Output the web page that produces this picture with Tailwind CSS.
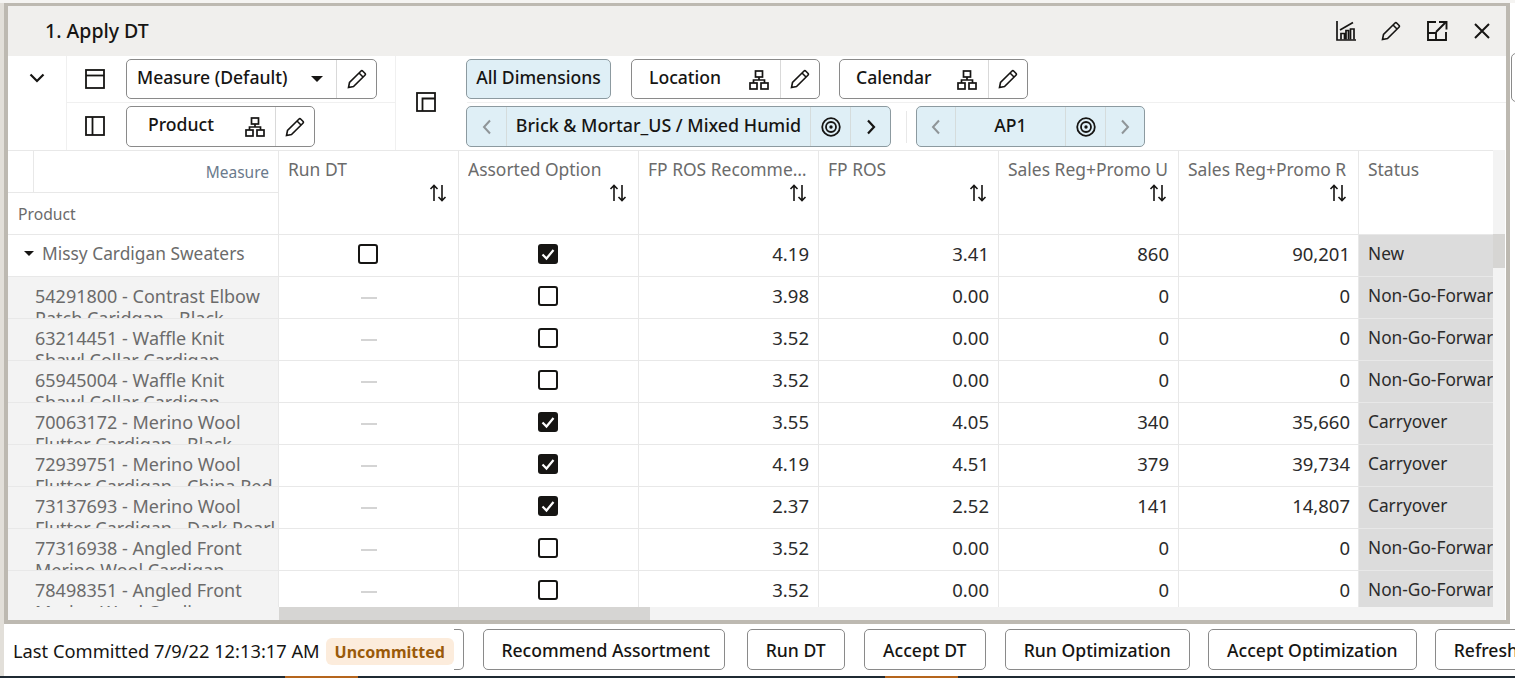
<!DOCTYPE html>
<html lang="en">
<head>
<meta charset="UTF-8" />
<title>1. Apply DT</title>
<script src="https://cdn.jsdelivr.net/npm/@tailwindcss/browser@4"></script>
</head>
<body class="w-[1515px] h-[678px] overflow-hidden bg-white font-['Noto_Sans',sans-serif] text-[17.6px] text-[#161513]">
<!-- top strip -->
<div class="h-[3px] bg-[#f5f4f2]"></div>
<div class="flex h-[673px]">
    <div class="w-[4px] bg-[#e2dfd9]"></div>
    <div class="w-[1511px] relative">
        <div class="absolute right-[-6px] top-[50px] w-[10px] h-[49px] border border-[#8a8a8a] rounded-[5px] bg-white"></div>

        <!-- panel -->
        <div class="w-[1506px] h-[621px] border-x-4 border-b-4 border-t-[3px] border-[#bdb9b1] flex flex-col bg-white">
            <!-- title bar -->
            <div class="h-[50px] bg-[#f0efed] flex items-center pl-[37px] pr-[15px] shrink-0">
                <div class="text-[19.5px] font-medium flex-1">1. Apply DT</div>
                <div class="flex items-center gap-[25px]">
                    <svg class="w-[20px] h-[20px]" viewBox="0 0 20 20" fill="none" stroke="#161513" stroke-width="1.700"><path d="M1 0v19h19"/><path d="M4 9L17 1.500"/><path d="M5 18.500v-6h3.500v6M10 18.500V9.500h2.500v9M14.500 18.500V8h3.500v10.500"/></svg>
                    <svg class="w-[20px] h-[20px]" viewBox="0 0 20 20" fill="none" stroke="#161513" stroke-width="1.600"><path d="M1.500 18.500l1-5L13.800 2.200a1.500 1.500 0 0 1 2.100 0l2 2a1.500 1.500 0 0 1 0 2.100L6.500 17.500z"/><path d="M12 4l4 4"/></svg>
                    <svg class="w-[22px] h-[22px]" viewBox="0 0 22 22" fill="none" stroke="#161513" stroke-width="1.900"><path d="M10 2H2v18h18v-8"/><path d="M2 13h8v7"/><path d="M10 12L20 2"/><path d="M13 2h7.500v7.500"/></svg>
                    <svg class="w-[18px] h-[18px]" viewBox="0 0 18 18" fill="none" stroke="#161513" stroke-width="2"><path d="M2 2l14 14M16 2L2 16"/></svg>
                </div>
            </div>

            <!-- toolbar -->
            <div class="h-[94px] shrink-0 flex bg-white">
                <div class="w-[59px] border-r border-[#f0f0f0] pt-[17px] pl-[21px]">
                    <svg class="w-[16px] h-[10px]" viewBox="0 0 16 10" fill="none" stroke="#161513" stroke-width="2.200"><path d="M1.500 1.500L8 8l6.500-6.500"/></svg>
                </div>
                <div class="w-[329px] border-r border-[#f0f0f0]">
                    <div class="h-[47px] border-b border-[#f0f0f0] pt-[3px] pl-[18px] flex">
                        <svg class="w-[20px] h-[20px] mt-[10px] mr-[21px]" viewBox="0 0 20 20" fill="none" stroke="#161513" stroke-width="1.800"><rect x="1" y="1" width="18" height="18"/><path d="M1 6.500h18"/></svg>
                        <div class="w-[251px] h-[40px] border border-[#8a8a8a] rounded-[5px] flex items-center">
                            <div class="flex-1 pl-[10px] font-medium pb-[4px]">Measure (Default)</div>
                            <div class="w-0 h-0 border-x-[6px] border-x-transparent border-t-[6px] border-t-[#161513] mr-[13px]"></div>
                            <div class="w-[40px] h-full border-l border-[#d9d9d9] flex items-center justify-center">
                                <svg class="w-[20px] h-[20px]" viewBox="0 0 20 20" fill="none" stroke="#161513" stroke-width="1.600"><path d="M1.500 18.500l1-5L13.800 2.200a1.500 1.500 0 0 1 2.100 0l2 2a1.500 1.500 0 0 1 0 2.100L6.500 17.500z"/><path d="M12 4l4 4"/></svg>
                            </div>
                        </div>
                    </div>
                    <div class="pt-[3px] pl-[18px] flex">
                        <svg class="w-[20px] h-[20px] mt-[10px] mr-[21px]" viewBox="0 0 20 20" fill="none" stroke="#161513" stroke-width="1.800"><rect x="1" y="1" width="18" height="18"/><path d="M7.500 1v18"/></svg>
                        <div class="w-[189px] h-[41px] border border-[#8a8a8a] rounded-[5px] flex items-center">
                            <div class="flex-1 pl-[21px] font-medium pb-[4px]">Product</div>
                            <svg class="w-[20px] h-[20px] mr-[10px] mt-[1px]" viewBox="0 0 20 20" fill="none" stroke="#161513" stroke-width="1.700"><rect x="6.500" y="1" width="7" height="6"/><rect x="1" y="13" width="7" height="6"/><rect x="12" y="13" width="7" height="6"/><path d="M10 7v3M4.500 13v-3h11v3"/></svg>
                            <div class="w-[39px] h-full border-l border-[#d9d9d9] flex items-center justify-center">
                                <svg class="w-[20px] h-[20px]" viewBox="0 0 20 20" fill="none" stroke="#161513" stroke-width="1.600"><path d="M1.500 18.500l1-5L13.800 2.200a1.500 1.500 0 0 1 2.100 0l2 2a1.500 1.500 0 0 1 0 2.100L6.500 17.500z"/><path d="M12 4l4 4"/></svg>
                            </div>
                        </div>
                    </div>
                </div>
                <div class="w-[60px] flex items-center justify-center pb-[2px]">
                    <svg class="w-[20px] h-[20px]" viewBox="0 0 20 20" fill="none" stroke="#161513" stroke-width="1.800"><rect x="1" y="1" width="18" height="18"/><path d="M6.500 19V6.500H19"/></svg>
                </div>
                <div class="flex-1">
                    <div class="h-[47px] border-b border-[#f0f0f0] ml-[11px] pt-[3px] flex">
                        <div class="w-[145px] h-[40px] -ml-[1px] border border-[#8c9aa0] rounded-[5px] bg-[#dfeff6] flex items-center justify-center font-medium pb-[4px]">All Dimensions</div>
                        <div class="w-[189px] h-[40px] ml-[20px] border border-[#8a8a8a] rounded-[5px] flex items-center">
                            <div class="flex-1 pl-[17px] font-medium pb-[4px]">Location</div>
                            <svg class="w-[20px] h-[20px] mr-[11px] mt-[1px]" viewBox="0 0 20 20" fill="none" stroke="#161513" stroke-width="1.700"><rect x="6.500" y="1" width="7" height="6"/><rect x="1" y="13" width="7" height="6"/><rect x="12" y="13" width="7" height="6"/><path d="M10 7v3M4.500 13v-3h11v3"/></svg>
                            <div class="w-[39px] h-full border-l border-[#d9d9d9] flex items-center justify-center">
                                <svg class="w-[20px] h-[20px]" viewBox="0 0 20 20" fill="none" stroke="#161513" stroke-width="1.600"><path d="M1.500 18.500l1-5L13.800 2.200a1.500 1.500 0 0 1 2.100 0l2 2a1.500 1.500 0 0 1 0 2.100L6.500 17.500z"/><path d="M12 4l4 4"/></svg>
                            </div>
                        </div>
                        <div class="w-[189px] h-[40px] ml-[19px] border border-[#8a8a8a] rounded-[5px] flex items-center">
                            <div class="flex-1 pl-[16px] font-medium pb-[4px]">Calendar</div>
                            <svg class="w-[20px] h-[20px] mr-[11px] mt-[1px]" viewBox="0 0 20 20" fill="none" stroke="#161513" stroke-width="1.700"><rect x="6.500" y="1" width="7" height="6"/><rect x="1" y="13" width="7" height="6"/><rect x="12" y="13" width="7" height="6"/><path d="M10 7v3M4.500 13v-3h11v3"/></svg>
                            <div class="w-[39px] h-full border-l border-[#d9d9d9] flex items-center justify-center">
                                <svg class="w-[20px] h-[20px]" viewBox="0 0 20 20" fill="none" stroke="#161513" stroke-width="1.600"><path d="M1.500 18.500l1-5L13.800 2.200a1.500 1.500 0 0 1 2.100 0l2 2a1.500 1.500 0 0 1 0 2.100L6.500 17.500z"/><path d="M12 4l4 4"/></svg>
                            </div>
                        </div>
                    </div>
                    <div class="pt-[3px] pl-[10px] flex items-start">
                        <div class="w-[425px] h-[41px] border border-[#8c9aa0] rounded-[5px] bg-[#dfeff6] flex items-center">
                            <div class="w-[40px] h-full border-r border-[#d5dcdc] flex items-center justify-center">
                                <svg class="w-[10px] h-[16px]" viewBox="0 0 10 16" fill="none" stroke="#8f9598" stroke-width="2"><path d="M8 1.500L2 8l6 6.500"/></svg>
                            </div>
                            <div class="w-[303px] h-full flex items-center justify-center font-medium pb-[2px] whitespace-nowrap text-[17.85px]">Brick &amp; Mortar_US / Mixed Humid</div>
                            <div class="w-[41px] h-full border-x border-[#d5dcdc] flex items-center justify-center">
                                <svg class="w-[20px] h-[20px]" viewBox="0 0 20 20" fill="none" stroke="#161513"><circle cx="10" cy="10" r="8.800" stroke-width="1.800"/><circle cx="10" cy="10" r="5" stroke-width="1.800"/><circle cx="10" cy="10" r="1.700" fill="#161513" stroke="none"/></svg>
                            </div>
                            <div class="flex-1 h-full flex items-center justify-center">
                                <svg class="w-[10px] h-[16px]" viewBox="0 0 10 16" fill="none" stroke="#161513" stroke-width="2.200"><path d="M2 1.500L8 8l-6 6.500"/></svg>
                            </div>
                        </div>
                        <div class="w-[1px] h-[32px] ml-[15px] mt-[5px] bg-[#e8e8e8]"></div>
                        <div class="w-[229px] h-[41px] ml-[9px] border border-[#8c9aa0] rounded-[5px] bg-[#dfeff6] flex items-center">
                            <div class="w-[39px] h-full border-r border-[#d5dcdc] flex items-center justify-center">
                                <svg class="w-[10px] h-[16px]" viewBox="0 0 10 16" fill="none" stroke="#8f9598" stroke-width="2"><path d="M8 1.500L2 8l6 6.500"/></svg>
                            </div>
                            <div class="w-[109px] h-full flex items-center justify-center font-medium pb-[2px]">AP1</div>
                            <div class="w-[41px] h-full border-x border-[#d5dcdc] flex items-center justify-center">
                                <svg class="w-[20px] h-[20px]" viewBox="0 0 20 20" fill="none" stroke="#161513"><circle cx="10" cy="10" r="8.800" stroke-width="1.800"/><circle cx="10" cy="10" r="5" stroke-width="1.800"/><circle cx="10" cy="10" r="1.700" fill="#161513" stroke="none"/></svg>
                            </div>
                            <div class="flex-1 h-full flex items-center justify-center">
                                <svg class="w-[10px] h-[16px]" viewBox="0 0 10 16" fill="none" stroke="#8f9598" stroke-width="2"><path d="M2 1.500L8 8l-6 6.500"/></svg>
                            </div>
                        </div>
                    </div>
                </div>
            </div>

            <!-- table -->
            <div class="flex h-[470px]">
                <div class="w-[1485px]">
                    <div class="h-[457px] overflow-hidden">
                        <!-- header -->
                        <div class="flex h-[85px] border-y border-[#e8e8e8] text-[#6b6b6b] text-[17.45px]">
                            <div class="w-[271px] border-r border-[#e8e8e8]">
                                <div class="flex h-[42px] border-b border-[#e8e8e8]">
                                    <div class="w-[26px] border-r border-[#e8e8e8]"></div>
                                    <div class="flex-1 text-right pr-[9px] pt-[10px] text-[15.5px] leading-[22px] text-[#6b7a8c]">Measure</div>
                                </div>
                                <div class="pl-[10px] pt-[10px] text-[15.7px] leading-[22px]">Product</div>
                            </div>
                            <div class="w-[180px] border-r border-[#e8e8e8] px-[9px] pt-[6px] leading-[24px]">
                                <div class="truncate">Run DT</div>
                                <svg class="w-[18px] h-[18px] ml-auto mr-[2px] mt-[3px]" viewBox="0 0 18 18" fill="none" stroke="#161513" stroke-width="1.600"><path d="M5 17V1.500M1.500 5L5 1.500 8.500 5"/><path d="M13 1v15.500M9.500 13l3.500 3.500 3.500-3.500"/></svg>
                            </div>
                            <div class="w-[180px] border-r border-[#e8e8e8] px-[9px] pt-[6px] leading-[24px]">
                                <div class="truncate">Assorted Option</div>
                                <svg class="w-[18px] h-[18px] ml-auto mr-[2px] mt-[3px]" viewBox="0 0 18 18" fill="none" stroke="#161513" stroke-width="1.600"><path d="M5 17V1.500M1.500 5L5 1.500 8.500 5"/><path d="M13 1v15.500M9.500 13l3.500 3.500 3.500-3.500"/></svg>
                            </div>
                            <div class="w-[180px] border-r border-[#e8e8e8] px-[9px] pt-[6px] leading-[24px]">
                                <div class="truncate">FP ROS Recommended</div>
                                <svg class="w-[18px] h-[18px] ml-auto mr-[2px] mt-[3px]" viewBox="0 0 18 18" fill="none" stroke="#161513" stroke-width="1.600"><path d="M5 17V1.500M1.500 5L5 1.500 8.500 5"/><path d="M13 1v15.500M9.500 13l3.500 3.500 3.500-3.500"/></svg>
                            </div>
                            <div class="w-[180px] border-r border-[#e8e8e8] px-[9px] pt-[6px] leading-[24px]">
                                <div class="truncate">FP ROS</div>
                                <svg class="w-[18px] h-[18px] ml-auto mr-[2px] mt-[3px]" viewBox="0 0 18 18" fill="none" stroke="#161513" stroke-width="1.600"><path d="M5 17V1.500M1.500 5L5 1.500 8.500 5"/><path d="M13 1v15.500M9.500 13l3.500 3.500 3.500-3.500"/></svg>
                            </div>
                            <div class="w-[180px] border-r border-[#e8e8e8] px-[9px] pt-[6px] leading-[24px]">
                                <div class="whitespace-nowrap overflow-hidden">Sales Reg+Promo U</div>
                                <svg class="w-[18px] h-[18px] ml-auto mr-[2px] mt-[3px]" viewBox="0 0 18 18" fill="none" stroke="#161513" stroke-width="1.600"><path d="M5 17V1.500M1.500 5L5 1.500 8.500 5"/><path d="M13 1v15.500M9.500 13l3.500 3.500 3.500-3.500"/></svg>
                            </div>
                            <div class="w-[180px] border-r border-[#e8e8e8] px-[9px] pt-[6px] leading-[24px]">
                                <div class="whitespace-nowrap overflow-hidden">Sales Reg+Promo R</div>
                                <svg class="w-[18px] h-[18px] ml-auto mr-[2px] mt-[3px]" viewBox="0 0 18 18" fill="none" stroke="#161513" stroke-width="1.600"><path d="M5 17V1.500M1.500 5L5 1.500 8.500 5"/><path d="M13 1v15.500M9.500 13l3.500 3.500 3.500-3.500"/></svg>
                            </div>
                            <div class="w-[134px] px-[9px] pt-[6px] leading-[24px]">Status</div>
                        </div>

                        <!-- rows -->
                        <div class="flex h-[42px] border-b border-[#e8e8e8] items-stretch text-[#2b2b2b]">
                            <div class="w-[271px] border-r border-[#e8e8e8] flex items-center pl-[16px] pb-[4px] text-[#6b6b6b] text-[17.35px]">
                                <div class="w-0 h-0 border-x-[5px] border-x-transparent border-t-[5px] border-t-[#161513] mr-[8px]"></div>Missy Cardigan Sweaters
                            </div>
                            <div class="w-[180px] border-r border-[#e8e8e8] flex items-center justify-center pb-[4px] pr-[2px]"><div class="w-[20px] h-[20px] border-2 border-[#161513] rounded-[3px]"></div></div>
                            <div class="w-[180px] border-r border-[#e8e8e8] flex items-center justify-center pb-[4px] pr-[2px]"><div class="w-[20px] h-[20px] bg-[#161513] rounded-[3px] flex items-center justify-center"><svg class="w-[14px] h-[14px]" viewBox="0 0 14 14" fill="none" stroke="#fff" stroke-width="2.200"><path d="M1.500 7.500L5.500 11.500L12.500 3"/></svg></div></div>
                            <div class="w-[180px] border-r border-[#e8e8e8] flex items-center justify-end pr-[9px] pb-[4px] text-[18.5px]">4.19</div>
                            <div class="w-[180px] border-r border-[#e8e8e8] flex items-center justify-end pr-[9px] pb-[4px] text-[18.5px]">3.41</div>
                            <div class="w-[180px] border-r border-[#e8e8e8] flex items-center justify-end pr-[9px] pb-[4px] text-[18.5px]">860</div>
                            <div class="w-[180px] border-r border-[#e8e8e8] flex items-center justify-end pr-[8px] pb-[4px] text-[18.5px]">90,201</div>
                            <div class="w-[134px] bg-[#dcdcdc] flex items-center pl-[9px] pb-[4px] whitespace-nowrap overflow-hidden text-[17.3px]">New</div>
                        </div>

                        <div class="flex h-[42px] border-b border-[#e8e8e8] items-stretch text-[#2b2b2b]">
                            <div class="w-[271px] border-r border-[#e8e8e8] bg-[#f3f3f3] pl-[27px] pt-[8px] leading-[22px] text-[#6b6b6b] text-[18px] overflow-hidden">54291800 - Contrast Elbow<br>Patch Caridgan - Black</div>
                            <div class="w-[180px] border-r border-[#e8e8e8] flex items-center justify-center"><div class="w-[16px] h-[2px] bg-[#d4d4d4]"></div></div>
                            <div class="w-[180px] border-r border-[#e8e8e8] flex items-center justify-center pb-[4px] pr-[2px]"><div class="w-[20px] h-[20px] border-2 border-[#161513] rounded-[3px]"></div></div>
                            <div class="w-[180px] border-r border-[#e8e8e8] flex items-center justify-end pr-[9px] pb-[4px] text-[18.5px]">3.98</div>
                            <div class="w-[180px] border-r border-[#e8e8e8] flex items-center justify-end pr-[9px] pb-[4px] text-[18.5px]">0.00</div>
                            <div class="w-[180px] border-r border-[#e8e8e8] flex items-center justify-end pr-[9px] pb-[4px] text-[18.5px]">0</div>
                            <div class="w-[180px] border-r border-[#e8e8e8] flex items-center justify-end pr-[8px] pb-[4px] text-[18.5px]">0</div>
                            <div class="w-[134px] bg-[#dcdcdc] flex items-center pl-[9px] pb-[4px] whitespace-nowrap overflow-hidden text-[17.3px]">Non-Go-Forward</div>
                        </div>

                        <div class="flex h-[42px] border-b border-[#e8e8e8] items-stretch text-[#2b2b2b]">
                            <div class="w-[271px] border-r border-[#e8e8e8] bg-[#f3f3f3] pl-[27px] pt-[8px] leading-[22px] text-[#6b6b6b] text-[18px] overflow-hidden">63214451 - Waffle Knit<br>Shawl Collar Cardigan</div>
                            <div class="w-[180px] border-r border-[#e8e8e8] flex items-center justify-center"><div class="w-[16px] h-[2px] bg-[#d4d4d4]"></div></div>
                            <div class="w-[180px] border-r border-[#e8e8e8] flex items-center justify-center pb-[4px] pr-[2px]"><div class="w-[20px] h-[20px] border-2 border-[#161513] rounded-[3px]"></div></div>
                            <div class="w-[180px] border-r border-[#e8e8e8] flex items-center justify-end pr-[9px] pb-[4px] text-[18.5px]">3.52</div>
                            <div class="w-[180px] border-r border-[#e8e8e8] flex items-center justify-end pr-[9px] pb-[4px] text-[18.5px]">0.00</div>
                            <div class="w-[180px] border-r border-[#e8e8e8] flex items-center justify-end pr-[9px] pb-[4px] text-[18.5px]">0</div>
                            <div class="w-[180px] border-r border-[#e8e8e8] flex items-center justify-end pr-[8px] pb-[4px] text-[18.5px]">0</div>
                            <div class="w-[134px] bg-[#dcdcdc] flex items-center pl-[9px] pb-[4px] whitespace-nowrap overflow-hidden text-[17.3px]">Non-Go-Forward</div>
                        </div>

                        <div class="flex h-[42px] border-b border-[#e8e8e8] items-stretch text-[#2b2b2b]">
                            <div class="w-[271px] border-r border-[#e8e8e8] bg-[#f3f3f3] pl-[27px] pt-[8px] leading-[22px] text-[#6b6b6b] text-[18px] overflow-hidden">65945004 - Waffle Knit<br>Shawl Collar Cardigan - Pearl</div>
                            <div class="w-[180px] border-r border-[#e8e8e8] flex items-center justify-center"><div class="w-[16px] h-[2px] bg-[#d4d4d4]"></div></div>
                            <div class="w-[180px] border-r border-[#e8e8e8] flex items-center justify-center pb-[4px] pr-[2px]"><div class="w-[20px] h-[20px] border-2 border-[#161513] rounded-[3px]"></div></div>
                            <div class="w-[180px] border-r border-[#e8e8e8] flex items-center justify-end pr-[9px] pb-[4px] text-[18.5px]">3.52</div>
                            <div class="w-[180px] border-r border-[#e8e8e8] flex items-center justify-end pr-[9px] pb-[4px] text-[18.5px]">0.00</div>
                            <div class="w-[180px] border-r border-[#e8e8e8] flex items-center justify-end pr-[9px] pb-[4px] text-[18.5px]">0</div>
                            <div class="w-[180px] border-r border-[#e8e8e8] flex items-center justify-end pr-[8px] pb-[4px] text-[18.5px]">0</div>
                            <div class="w-[134px] bg-[#dcdcdc] flex items-center pl-[9px] pb-[4px] whitespace-nowrap overflow-hidden text-[17.3px]">Non-Go-Forward</div>
                        </div>

                        <div class="flex h-[42px] border-b border-[#e8e8e8] items-stretch text-[#2b2b2b]">
                            <div class="w-[271px] border-r border-[#e8e8e8] bg-[#f3f3f3] pl-[27px] pt-[8px] leading-[22px] text-[#6b6b6b] text-[18px] overflow-hidden">70063172 - Merino Wool<br>Flutter Cardigan - Black</div>
                            <div class="w-[180px] border-r border-[#e8e8e8] flex items-center justify-center"><div class="w-[16px] h-[2px] bg-[#d4d4d4]"></div></div>
                            <div class="w-[180px] border-r border-[#e8e8e8] flex items-center justify-center pb-[4px] pr-[2px]"><div class="w-[20px] h-[20px] bg-[#161513] rounded-[3px] flex items-center justify-center"><svg class="w-[14px] h-[14px]" viewBox="0 0 14 14" fill="none" stroke="#fff" stroke-width="2.200"><path d="M1.500 7.500L5.500 11.500L12.500 3"/></svg></div></div>
                            <div class="w-[180px] border-r border-[#e8e8e8] flex items-center justify-end pr-[9px] pb-[4px] text-[18.5px]">3.55</div>
                            <div class="w-[180px] border-r border-[#e8e8e8] flex items-center justify-end pr-[9px] pb-[4px] text-[18.5px]">4.05</div>
                            <div class="w-[180px] border-r border-[#e8e8e8] flex items-center justify-end pr-[9px] pb-[4px] text-[18.5px]">340</div>
                            <div class="w-[180px] border-r border-[#e8e8e8] flex items-center justify-end pr-[8px] pb-[4px] text-[18.5px]">35,660</div>
                            <div class="w-[134px] bg-[#dcdcdc] flex items-center pl-[9px] pb-[4px] whitespace-nowrap overflow-hidden text-[17.3px]">Carryover</div>
                        </div>

                        <div class="flex h-[42px] border-b border-[#e8e8e8] items-stretch text-[#2b2b2b]">
                            <div class="w-[271px] border-r border-[#e8e8e8] bg-[#f3f3f3] pl-[27px] pt-[8px] leading-[22px] text-[#6b6b6b] text-[18px] overflow-hidden">72939751 - Merino Wool<br>Flutter Cardigan - China Red</div>
                            <div class="w-[180px] border-r border-[#e8e8e8] flex items-center justify-center"><div class="w-[16px] h-[2px] bg-[#d4d4d4]"></div></div>
                            <div class="w-[180px] border-r border-[#e8e8e8] flex items-center justify-center pb-[4px] pr-[2px]"><div class="w-[20px] h-[20px] bg-[#161513] rounded-[3px] flex items-center justify-center"><svg class="w-[14px] h-[14px]" viewBox="0 0 14 14" fill="none" stroke="#fff" stroke-width="2.200"><path d="M1.500 7.500L5.500 11.500L12.500 3"/></svg></div></div>
                            <div class="w-[180px] border-r border-[#e8e8e8] flex items-center justify-end pr-[9px] pb-[4px] text-[18.5px]">4.19</div>
                            <div class="w-[180px] border-r border-[#e8e8e8] flex items-center justify-end pr-[9px] pb-[4px] text-[18.5px]">4.51</div>
                            <div class="w-[180px] border-r border-[#e8e8e8] flex items-center justify-end pr-[9px] pb-[4px] text-[18.5px]">379</div>
                            <div class="w-[180px] border-r border-[#e8e8e8] flex items-center justify-end pr-[8px] pb-[4px] text-[18.5px]">39,734</div>
                            <div class="w-[134px] bg-[#dcdcdc] flex items-center pl-[9px] pb-[4px] whitespace-nowrap overflow-hidden text-[17.3px]">Carryover</div>
                        </div>

                        <div class="flex h-[42px] border-b border-[#e8e8e8] items-stretch text-[#2b2b2b]">
                            <div class="w-[271px] border-r border-[#e8e8e8] bg-[#f3f3f3] pl-[27px] pt-[8px] leading-[22px] text-[#6b6b6b] text-[18px] overflow-hidden">73137693 - Merino Wool<br>Flutter Cardigan - Dark Pearl</div>
                            <div class="w-[180px] border-r border-[#e8e8e8] flex items-center justify-center"><div class="w-[16px] h-[2px] bg-[#d4d4d4]"></div></div>
                            <div class="w-[180px] border-r border-[#e8e8e8] flex items-center justify-center pb-[4px] pr-[2px]"><div class="w-[20px] h-[20px] bg-[#161513] rounded-[3px] flex items-center justify-center"><svg class="w-[14px] h-[14px]" viewBox="0 0 14 14" fill="none" stroke="#fff" stroke-width="2.200"><path d="M1.500 7.500L5.500 11.500L12.500 3"/></svg></div></div>
                            <div class="w-[180px] border-r border-[#e8e8e8] flex items-center justify-end pr-[9px] pb-[4px] text-[18.5px]">2.37</div>
                            <div class="w-[180px] border-r border-[#e8e8e8] flex items-center justify-end pr-[9px] pb-[4px] text-[18.5px]">2.52</div>
                            <div class="w-[180px] border-r border-[#e8e8e8] flex items-center justify-end pr-[9px] pb-[4px] text-[18.5px]">141</div>
                            <div class="w-[180px] border-r border-[#e8e8e8] flex items-center justify-end pr-[8px] pb-[4px] text-[18.5px]">14,807</div>
                            <div class="w-[134px] bg-[#dcdcdc] flex items-center pl-[9px] pb-[4px] whitespace-nowrap overflow-hidden text-[17.3px]">Carryover</div>
                        </div>

                        <div class="flex h-[42px] border-b border-[#e8e8e8] items-stretch text-[#2b2b2b]">
                            <div class="w-[271px] border-r border-[#e8e8e8] bg-[#f3f3f3] pl-[27px] pt-[8px] leading-[22px] text-[#6b6b6b] text-[18px] overflow-hidden">77316938 - Angled Front<br>Merino Wool Cardigan</div>
                            <div class="w-[180px] border-r border-[#e8e8e8] flex items-center justify-center"><div class="w-[16px] h-[2px] bg-[#d4d4d4]"></div></div>
                            <div class="w-[180px] border-r border-[#e8e8e8] flex items-center justify-center pb-[4px] pr-[2px]"><div class="w-[20px] h-[20px] border-2 border-[#161513] rounded-[3px]"></div></div>
                            <div class="w-[180px] border-r border-[#e8e8e8] flex items-center justify-end pr-[9px] pb-[4px] text-[18.5px]">3.52</div>
                            <div class="w-[180px] border-r border-[#e8e8e8] flex items-center justify-end pr-[9px] pb-[4px] text-[18.5px]">0.00</div>
                            <div class="w-[180px] border-r border-[#e8e8e8] flex items-center justify-end pr-[9px] pb-[4px] text-[18.5px]">0</div>
                            <div class="w-[180px] border-r border-[#e8e8e8] flex items-center justify-end pr-[8px] pb-[4px] text-[18.5px]">0</div>
                            <div class="w-[134px] bg-[#dcdcdc] flex items-center pl-[9px] pb-[4px] whitespace-nowrap overflow-hidden text-[17.3px]">Non-Go-Forward</div>
                        </div>

                        <div class="flex h-[42px] border-b border-[#e8e8e8] items-stretch text-[#2b2b2b]">
                            <div class="w-[271px] border-r border-[#e8e8e8] bg-[#f3f3f3] pl-[27px] pt-[8px] leading-[22px] text-[#6b6b6b] text-[18px] overflow-hidden">78498351 - Angled Front<br>Merino Wool Cardigan</div>
                            <div class="w-[180px] border-r border-[#e8e8e8] flex items-center justify-center"><div class="w-[16px] h-[2px] bg-[#d4d4d4]"></div></div>
                            <div class="w-[180px] border-r border-[#e8e8e8] flex items-center justify-center pb-[4px] pr-[2px]"><div class="w-[20px] h-[20px] border-2 border-[#161513] rounded-[3px]"></div></div>
                            <div class="w-[180px] border-r border-[#e8e8e8] flex items-center justify-end pr-[9px] pb-[4px] text-[18.5px]">3.52</div>
                            <div class="w-[180px] border-r border-[#e8e8e8] flex items-center justify-end pr-[9px] pb-[4px] text-[18.5px]">0.00</div>
                            <div class="w-[180px] border-r border-[#e8e8e8] flex items-center justify-end pr-[9px] pb-[4px] text-[18.5px]">0</div>
                            <div class="w-[180px] border-r border-[#e8e8e8] flex items-center justify-end pr-[8px] pb-[4px] text-[18.5px]">0</div>
                            <div class="w-[134px] bg-[#dcdcdc] flex items-center pl-[9px] pb-[4px] whitespace-nowrap overflow-hidden text-[17.3px]">Non-Go-Forward</div>
                        </div>
                    </div>
                    <!-- horizontal scrollbar -->
                    <div class="h-[13px] bg-[#f3f3f3] pl-[271px]"><div class="w-[371px] h-full bg-[#d6d5d3]"></div></div>
                </div>
                <!-- vertical scrollbar -->
                <div class="w-[12px] bg-[#f3f3f3] pt-[84px]"><div class="h-[34px] bg-[#d6d5d3]"></div></div>
            </div>
        </div>

        <!-- footer -->
        <div class="h-[52px] flex items-start pt-[5px] overflow-hidden whitespace-nowrap bg-white">
            <div class="ml-[9px] h-[41px] flex items-center pt-[3px] text-[18.3px] shrink-0">Last Committed 7/9/22 12:13:17 AM</div>
            <div class="ml-[6px] mt-[9px] w-[128px] h-[27px] shrink-0 rounded-[6px] bg-[#fcecdc] text-[#9a5a0a] font-bold text-[16px] flex items-center justify-center">Uncommitted</div>
            <div class="w-[10px] h-[41px] shrink-0 border-y border-r border-[#8a8a8a] rounded-r-[5px]"></div>
            <div class="ml-[19px] w-[242px] h-[41px] shrink-0 border border-[#8a8a8a] rounded-[5px] flex items-center justify-center font-medium pt-[2px] pl-[4px]">Recommend Assortment</div>
            <div class="ml-[22px] w-[98px] h-[41px] shrink-0 border border-[#8a8a8a] rounded-[5px] flex items-center justify-center font-medium pt-[2px]">Run DT</div>
            <div class="ml-[19px] w-[122px] h-[41px] shrink-0 border border-[#8a8a8a] rounded-[5px] flex items-center justify-center font-medium pt-[2px]">Accept DT</div>
            <div class="ml-[19px] w-[185px] h-[41px] shrink-0 border border-[#8a8a8a] rounded-[5px] flex items-center justify-center font-medium pt-[2px]">Run Optimization</div>
            <div class="ml-[18px] w-[209px] h-[41px] shrink-0 border border-[#8a8a8a] rounded-[5px] flex items-center justify-center font-medium pt-[2px]">Accept Optimization</div>
            <div class="ml-[18px] w-[140px] h-[41px] shrink-0 border border-[#8a8a8a] rounded-[5px] pl-[18px] flex items-center font-medium pt-[2px]">Refresh</div>
        </div>
    </div>
</div>
<!-- dark strip along the bottom edge -->
<div class="h-[2px] bg-[#1f2a33] flex pl-[285px]">
    <div class="w-[73px] bg-[#b5651d]"></div>
    <div class="w-[527px]"></div>
    <div class="w-[73px] bg-[#b5651d]"></div>
</div>
</body>
</html>
